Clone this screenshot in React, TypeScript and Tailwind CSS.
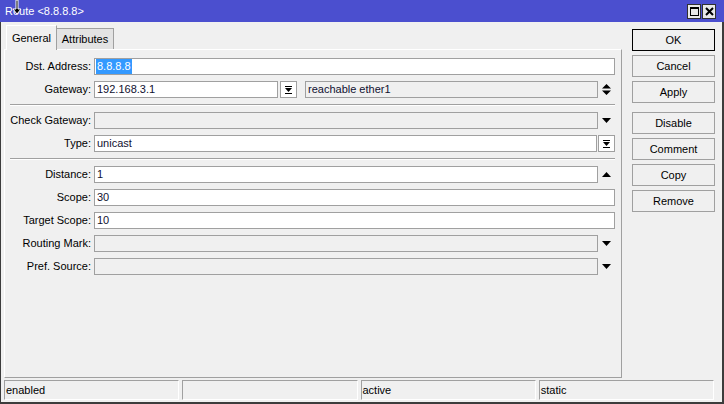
import type { ReactNode } from "react";

function DownTri() {
  return (
    <svg width="9" height="5" viewBox="0 0 9 5">
      <path d="M0 0H9L4.5 5Z" fill="#000" />
    </svg>
  );
}

function UpTri() {
  return (
    <svg width="9" height="5" viewBox="0 0 9 5">
      <path d="M0 5H9L4.5 0Z" fill="#000" />
    </svg>
  );
}

function UpDown() {
  return (
    <svg width="9" height="11" viewBox="0 0 9 11">
      <path d="M0 4.5H9L4.5 0Z M0 6.5H9L4.5 11Z" fill="#000" />
    </svg>
  );
}

function DropBtn() {
  return (
    <div className="w-[17px] h-[17px] shrink-0 border border-[#a0a0a0] bg-white flex items-center justify-center">
      <svg width="7" height="8" viewBox="0 0 7 8">
        <path d="M0 0H7V1H0Z M0 2H7L3.5 6Z M0 7H7V8H0Z" fill="#000" />
      </svg>
    </div>
  );
}

function Icon({ children }: { children?: ReactNode }) {
  return <div className="w-[17px] h-[17px] shrink-0 flex items-center justify-center">{children}</div>;
}

function Box({ value, gray, selected, className }: { value?: string; gray?: boolean; selected?: boolean; className?: string }) {
  return (
    <div
      className={`h-[17px] border border-[#a0a0a0] flex items-center pl-[1px] whitespace-nowrap overflow-hidden ${gray ? "bg-[#f0f0f0]" : "bg-white"} ${className ?? "flex-1"}`}
    >
      {selected ? (
        <span className="bg-[#3399ff] text-white h-[15px] leading-[15px] px-[1px]">{value}</span>
      ) : (
        <span className="px-[1px] text-[#101030]">{value}</span>
      )}
    </div>
  );
}

function Row({ label, children }: { label: string; children: ReactNode }) {
  return (
    <div className="flex items-center h-[17px]">
      <div className="w-[86px] text-right whitespace-nowrap">{label}</div>
      <div className="ml-[3px] flex-1 flex items-center h-full">{children}</div>
    </div>
  );
}

function Sep() {
  return <div className="ml-[5px] my-[6px] border-t border-b border-t-[#a0a0a0] border-b-white" />;
}

function Btn({ label, def }: { label: string; def?: boolean }) {
  return (
    <div
      className={`h-[22px] w-full flex items-center justify-center bg-[#f0f0f0] border ${def ? "border-black" : "border-[#a0a0a0]"}`}
    >
      {label}
    </div>
  );
}

export default function App() {
  return (
    <div className="relative w-[724px] h-[404px] flex flex-col bg-[#f0f0f0] text-[11px] text-black font-['Liberation_Sans',Arial,sans-serif]">
      {/* title bar */}
      <div className="h-[22px] shrink-0 bg-[#4b4fcf] flex items-center pl-[5px] pr-[8px]">
        <span className="text-white text-[11px]">Route &lt;8.8.8.8&gt;</span>
        <div className="ml-auto flex gap-[1px]">
          <div className="w-[14px] h-[15px] border border-[#303030] bg-[#e8e8e8] flex items-center justify-center">
            <svg width="9" height="9" viewBox="0 0 9 9">
              <path d="M0 0H9V9H0Z M1 2V8H8V2Z" fill="#000" fillRule="evenodd" />
            </svg>
          </div>
          <div className="w-[14px] h-[15px] border border-[#303030] bg-[#e8e8e8] flex items-center justify-center">
            <svg width="9" height="9" viewBox="0 0 9 9">
              <path d="M1 1L8 8M8 1L1 8" stroke="#000" strokeWidth="2" />
            </svg>
          </div>
        </div>
      </div>

      {/* body */}
      <div className="flex-1 flex flex-col border-l border-r-2 border-b-2 border-[#3c3c3c]">
        <div className="flex h-[356px]">
          {/* tabs + panel */}
          <div className="ml-[3px] w-[618px] pt-[2px] flex flex-col">
            <div className="flex items-end h-[25px] pl-[2px]">
              <div className="relative z-10 -mb-px h-[25px] w-[51px] bg-[#f0f0f0] border-t border-l border-r border-t-white border-l-white border-r-[#a0a0a0] flex items-center justify-center">
                General
              </div>
              <div className="h-[21px] w-[57px] bg-[#e3e3e3] border-t border-r border-[#a0a0a0] flex items-center justify-center">
                Attributes
              </div>
            </div>
            <div className="flex-1 border border-[#a0a0a0] border-t-white border-l-white pt-[8px] pr-[6px] flex flex-col">
              <div className="flex flex-col gap-[6px]">
                <Row label="Dst. Address:">
                  <Box value="8.8.8.8" selected />
                </Row>
                <Row label="Gateway:">
                  <Box value="192.168.3.1" className="w-[184px]" />
                  <div className="ml-[2px]">
                    <DropBtn />
                  </div>
                  <Box value="reachable ether1" gray className="ml-[8px] flex-1" />
                  <Icon>
                    <UpDown />
                  </Icon>
                </Row>
              </div>
              <Sep />
              <div className="flex flex-col gap-[6px]">
                <Row label="Check Gateway:">
                  <Box gray />
                  <Icon>
                    <DownTri />
                  </Icon>
                </Row>
                <Row label="Type:">
                  <Box value="unicast" />
                  <div className="ml-[1px]">
                    <DropBtn />
                  </div>
                </Row>
              </div>
              <Sep />
              <div className="flex flex-col gap-[6px]">
                <Row label="Distance:">
                  <Box value="1" />
                  <Icon>
                    <UpTri />
                  </Icon>
                </Row>
                <Row label="Scope:">
                  <Box value="30" />
                </Row>
                <Row label="Target Scope:">
                  <Box value="10" />
                </Row>
                <Row label="Routing Mark:">
                  <Box gray />
                  <Icon>
                    <DownTri />
                  </Icon>
                </Row>
                <Row label="Pref. Source:">
                  <Box gray />
                  <Icon>
                    <DownTri />
                  </Icon>
                </Row>
              </div>
            </div>
          </div>

          {/* buttons */}
          <div className="ml-[10px] w-[83px] pt-[7px] flex flex-col gap-[4px]">
            <Btn label="OK" def />
            <Btn label="Cancel" />
            <Btn label="Apply" />
            <div className="mt-[5px]">
              <Btn label="Disable" />
            </div>
            <Btn label="Comment" />
            <Btn label="Copy" />
            <Btn label="Remove" />
          </div>
        </div>

        {/* status bar */}
        <div className="flex gap-[3px] ml-[3px] mr-[8px] mt-[2px] h-[20px]">
          {["enabled", "", "active", "static"].map((s, i) => (
            <div
              key={i}
              className="flex-1 border border-t-[#a0a0a0] border-l-[#a0a0a0] border-b-white border-r-white flex items-center pl-[1px]"
            >
              {s}
            </div>
          ))}
        </div>
      </div>

      {/* mouse pointer */}
      <svg className="absolute left-[11px] top-0" width="12" height="16" viewBox="0 0 12 16">
        <path d="M5 0H7V9H10L6 14L2 9H5Z" fill="#000" stroke="#fff" strokeWidth="1" />
      </svg>
    </div>
  );
}
